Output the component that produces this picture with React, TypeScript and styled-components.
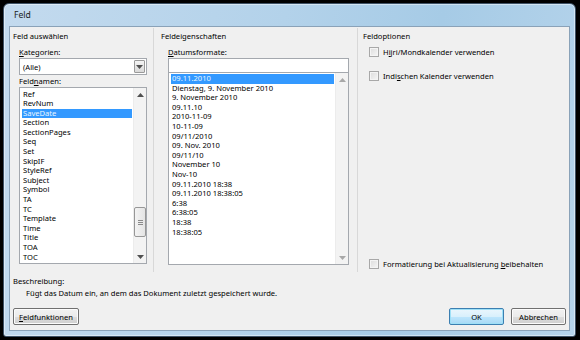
import React from 'react';
import styled, { createGlobalStyle } from 'styled-components';

const uiFont = `"Noto Sans", "Open Sans", "Liberation Sans", sans-serif`;

const GlobalStyle = createGlobalStyle`
  html, body {
    margin: 0;
    background: #000;
  }
  body {
    font-family: ${uiFont};
    font-size: 7.6px;
    color: #000;
  }
  * {
    box-sizing: border-box;
  }
`;

const Screen = styled.div`
  width: 580px;
  height: 340px;
  overflow: hidden;
  padding: 3px 0 0 3px;
  background: #000;
`;

const Window = styled.div`
  width: 573px;
  height: 334px;
  display: flex;
  flex-direction: column;
  padding: 0 5px 5px;
  border: 1px solid #3e5266;
  border-radius: 6px 6px 3px 3px;
  background: linear-gradient(100deg, #c3daee 0%, #b3d2ea 45%, #a6cbe6 70%, #b6d4eb 100%);
  box-shadow: inset 0 0 0 1px rgba(255, 255, 255, 0.45);
`;

const TitleBar = styled.div`
  height: 22px;
  display: flex;
  align-items: center;
  padding-left: 5px;
  font-size: 8.6px;
  color: #1a1a1a;
`;

const Client = styled.div`
  flex: 1;
  display: flex;
  flex-direction: column;
  background: #f0f0f0;
  border: 1px solid #8aa2b8;
`;

const Columns = styled.div`
  display: flex;
  height: 244px;
  margin-top: 1px;
`;

const Column = styled.div<{ $width?: number; $pad: number; $last?: boolean }>`
  ${({ $width }) => ($width ? `width: ${$width}px;` : 'flex: 1;')}
  display: flex;
  flex-direction: column;
  padding: 2.5px 0 2.5px ${({ $pad }) => $pad}px;
  border-right: ${({ $last }) => ($last ? 'none' : '1px solid #d8d8d8')};
`;

const GroupTitle = styled.div`
  height: 11px;
  line-height: 11px;
  white-space: nowrap;
`;

const Controls = styled.div<{ $indent: number }>`
  display: flex;
  flex-direction: column;
  padding-left: ${({ $indent }) => $indent}px;
`;

const FieldLabel = styled.div<{ $top: number }>`
  height: 11px;
  line-height: 11px;
  margin-top: ${({ $top }) => $top}px;
  margin-bottom: 0.5px;
  white-space: nowrap;
`;

const ComboBox = styled.div`
  width: 128px;
  height: 17px;
  display: flex;
  align-items: center;
  justify-content: space-between;
  padding: 0 1px 0 3px;
  background: #fff;
  border: 1px solid #a4a8ae;
`;

const DropButton = styled.div`
  width: 11px;
  height: 13px;
  display: flex;
  align-items: center;
  justify-content: center;
  border: 1px solid #9a9a9a;
  border-radius: 1px;
  background: linear-gradient(#f4f4f4, #d9d9d9);
`;

const TextInput = styled.div`
  width: 181px;
  height: 15px;
  background: #fff;
  border: 1px solid #a4a8ae;
`;

const ListBox = styled.div<{ $width: number; $height: number; $joined?: boolean }>`
  width: ${({ $width }) => $width}px;
  height: ${({ $height }) => $height}px;
  display: flex;
  background: #fff;
  border: 1px solid #a4a8ae;
  margin-top: ${({ $joined }) => ($joined ? '-1px' : '0')};
`;

const Items = styled.div<{ $padTop: number }>`
  flex: 1;
  padding: ${({ $padTop }) => $padTop}px 1px 0 2px;
  overflow: hidden;
`;

const ListItem = styled.div<{ $selected?: boolean }>`
  height: 9.6px;
  line-height: 9.6px;
  padding-left: 1px;
  white-space: nowrap;
  background: ${({ $selected }) => ($selected ? '#3399ff' : 'transparent')};
  color: ${({ $selected }) => ($selected ? '#e8f6ff' : '#000')};
`;

const ScrollBar = styled.div`
  width: 13px;
  display: flex;
  flex-direction: column;
  background: #f3f3f3;
  border-left: 1px solid #ececec;
`;

const ArrowBox = styled.div`
  height: 13px;
  display: flex;
  align-items: center;
  justify-content: center;
`;

const Track = styled.div`
  flex: 1;
  display: flex;
  flex-direction: column;
`;

const Thumb = styled.div<{ $offset: number; $size: number }>`
  margin: ${({ $offset }) => $offset}px 0 0 0;
  height: ${({ $size }) => $size}px;
  display: flex;
  flex-direction: column;
  align-items: center;
  justify-content: center;
  gap: 1px;
  border: 1px solid #979797;
  border-radius: 2px;
  background: linear-gradient(90deg, #f3f3f3, #e4e4e4);
`;

const Grip = styled.span`
  width: 5px;
  height: 1px;
  background: #8a8a8a;
`;

const OptionRow = styled.div<{ $top?: number; $bottom?: boolean }>`
  display: flex;
  align-items: center;
  height: 11px;
  padding-left: 6px;
  margin-top: ${({ $top, $bottom }) => ($bottom ? 'auto' : `${$top ?? 0}px`)};
  white-space: nowrap;
`;

const CheckBox = styled.span`
  width: 10px;
  height: 10px;
  margin-right: 4px;
  border: 1px solid #a8a8a8;
  background: linear-gradient(135deg, #dcdcdc, #f6f6f6);
  box-shadow: inset 0 0 0 1px #f4f4f4;
`;

const Bottom = styled.div`
  flex: 1;
  display: flex;
  flex-direction: column;
  padding: 3.5px 3px 0;
`;

const Text = styled.div<{ $indent?: number }>`
  height: 11px;
  line-height: 11px;
  padding-left: ${({ $indent }) => $indent ?? 0}px;
  margin-bottom: 1px;
  white-space: nowrap;
`;

const ButtonRow = styled.div`
  display: flex;
  gap: 7px;
  margin-top: 8.5px;
`;

const PushButton = styled.div<{ $width: number; $default?: boolean; $push?: boolean }>`
  width: ${({ $width }) => $width}px;
  height: 17px;
  display: flex;
  align-items: center;
  justify-content: center;
  margin-left: ${({ $push }) => ($push ? 'auto' : '0')};
  border: 1px solid ${({ $default }) => ($default ? '#3c7fb1' : '#707070')};
  border-radius: 2px;
  background: ${({ $default }) =>
    $default
      ? 'linear-gradient(#eaf6fd 0%, #d9f0fc 50%, #bee6fd 51%, #a7d9f5 100%)'
      : 'linear-gradient(#f2f2f2 0%, #ebebeb 50%, #dddddd 51%, #cfcfcf 100%)'};
  box-shadow: inset 0 0 0 1px ${({ $default }) => ($default ? '#9ee0f7' : '#fcfcfc')};
  white-space: nowrap;
`;

function ArrowIcon({ up, light }: { up?: boolean; light?: boolean }) {
  return (
    <svg width="7" height="4" viewBox="0 0 7 4">
      <polygon
        points={up ? '0,4 7,4 3.5,0' : '0,0 7,0 3.5,4'}
        fill={light ? '#a8a8a8' : '#505050'}
      />
    </svg>
  );
}

const fieldNames = [
  'Ref', 'RevNum', 'SaveDate', 'Section', 'SectionPages', 'Seq', 'Set', 'SkipIF',
  'StyleRef', 'Subject', 'Symbol', 'TA', 'TC', 'Template', 'Time', 'Title', 'TOA', 'TOC',
];

const dateFormats = [
  '09.11.2010', 'Dienstag, 9. November 2010', '9. November 2010', '09.11.10',
  '2010-11-09', '10-11-09', '09/11/2010', '09. Nov. 2010', '09/11/10', 'November 10',
  'Nov-10', '09.11.2010 18:38', '09.11.2010 18:38:05', '6:38', '6:38:05', '18:38', '18:38:05',
];

export default function App() {
  return (
    <Screen>
      <GlobalStyle />
      <Window>
        <TitleBar>Feld</TitleBar>
        <Client>
          <Columns>
            <Column $width={144} $pad={3}>
              <GroupTitle>Feld auswählen</GroupTitle>
              <Controls $indent={6}>
                <FieldLabel $top={5}>
                  <u>K</u>ategorien:
                </FieldLabel>
                <ComboBox>
                  <span>(Alle)</span>
                  <DropButton>
                    <ArrowIcon />
                  </DropButton>
                </ComboBox>
                <FieldLabel $top={0.5}>
                  Feld<u>n</u>amen:
                </FieldLabel>
                <ListBox $width={128} $height={177}>
                  <Items $padTop={1.5}>
                    {fieldNames.map(name => (
                      <ListItem key={name} $selected={name === 'SaveDate'}>
                        {name}
                      </ListItem>
                    ))}
                  </Items>
                  <ScrollBar>
                    <ArrowBox>
                      <ArrowIcon up />
                    </ArrowBox>
                    <Track>
                      <Thumb $offset={106} $size={30}>
                        <Grip />
                        <Grip />
                        <Grip />
                      </Thumb>
                    </Track>
                    <ArrowBox>
                      <ArrowIcon />
                    </ArrowBox>
                  </ScrollBar>
                </ListBox>
              </Controls>
            </Column>

            <Column $width={204} $pad={7}>
              <GroupTitle>Feldeigenschaften</GroupTitle>
              <Controls $indent={7}>
                <FieldLabel $top={5}>
                  <u>D</u>atumsformate:
                </FieldLabel>
                <TextInput />
                <ListBox $width={181} $height={193} $joined>
                  <Items $padTop={1}>
                    {dateFormats.map((fmt, i) => (
                      <ListItem key={fmt} $selected={i === 0}>
                        {fmt}
                      </ListItem>
                    ))}
                  </Items>
                  <ScrollBar>
                    <ArrowBox>
                      <ArrowIcon up light />
                    </ArrowBox>
                    <Track />
                    <ArrowBox>
                      <ArrowIcon light />
                    </ArrowBox>
                  </ScrollBar>
                </ListBox>
              </Controls>
            </Column>

            <Column $pad={5} $last>
              <GroupTitle>Feldoptionen</GroupTitle>
              <OptionRow $top={5}>
                <CheckBox />
                <span>
                  H<u>i</u>jri/Mondkalender verwenden
                </span>
              </OptionRow>
              <OptionRow $top={12.5}>
                <CheckBox />
                <span>
                  Indi<u>s</u>chen Kalender verwenden
                </span>
              </OptionRow>
              <OptionRow $bottom>
                <CheckBox />
                <span>
                  Formatierung bei Aktualisierung <u>b</u>eibehalten
                </span>
              </OptionRow>
            </Column>
          </Columns>

          <Bottom>
            <Text>Beschreibung:</Text>
            <Text $indent={13}>Fügt das Datum ein, an dem das Dokument zuletzt gespeichert wurde.</Text>
            <ButtonRow>
              <PushButton $width={66}>
                <u>F</u>eldfunktionen
              </PushButton>
              <PushButton $width={55} $default $push>
                OK
              </PushButton>
              <PushButton $width={55}>Abbrechen</PushButton>
            </ButtonRow>
          </Bottom>
        </Client>
      </Window>
    </Screen>
  );
}
